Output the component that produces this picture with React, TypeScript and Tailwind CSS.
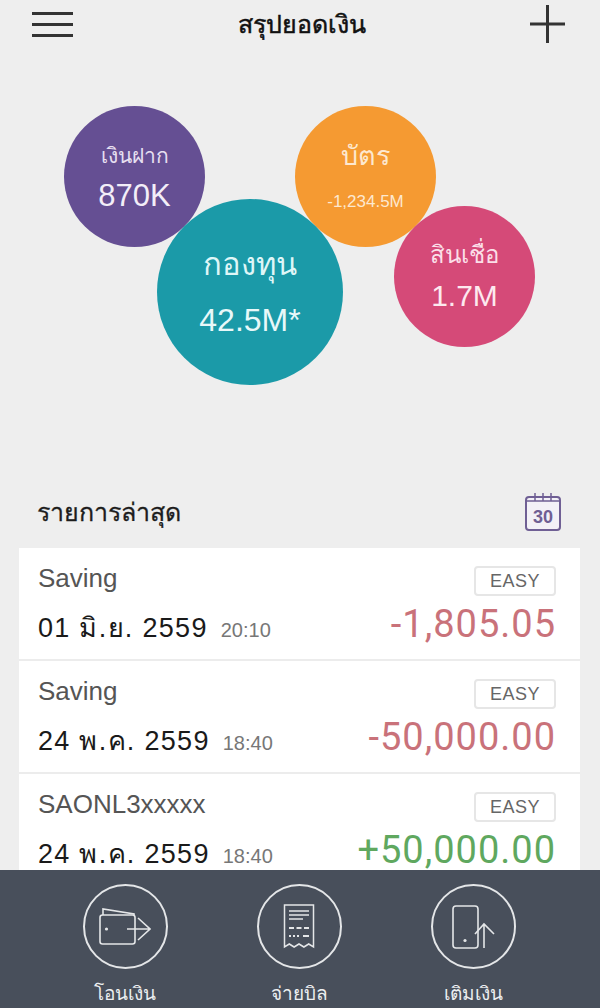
import React from 'react';

const font = { fontFamily: '"Liberation Sans", "Noto Sans", sans-serif' };

const rows = [
  { name: 'Saving', date: '01 มิ.ย. 2559', time: '20:10', amount: '-1,805.05', color: 'text-[#c9727a]' },
  { name: 'Saving', date: '24 พ.ค. 2559', time: '18:40', amount: '-50,000.00', color: 'text-[#c9727a]' },
  { name: 'SAONL3xxxxx', date: '24 พ.ค. 2559', time: '18:40', amount: '+50,000.00', color: 'text-[#5fa85f]' },
];

const Bubble: React.FC<{ className: string; label: string; value: string; labelClass: string; valueClass: string }> = ({ className, label, value, labelClass, valueClass }) => (
  <div className={`absolute rounded-full flex flex-col items-center justify-center text-white ${className}`}>
    <div className={labelClass}>{label}</div>
    <div className={valueClass}>{value}</div>
  </div>
);

const NavButton: React.FC<{ label: string; children: React.ReactNode }> = ({ label, children }) => (
  <div className="w-[120px] flex flex-col items-center">
    <div className="w-[85px] h-[85px] rounded-full border-2 border-[#e4e6e8] flex items-center justify-center">
      {children}
    </div>
    <div className="mt-[11px] text-[19px] leading-[28px] text-[#eceef0]">{label}</div>
  </div>
);

const App: React.FC = () => {
  return (
    <div className="w-[600px] h-[1008px] overflow-hidden flex flex-col bg-[#eeeeee]" style={font}>
      <header className="h-[50px] shrink-0 flex items-center justify-between pl-[32px] pr-[35px]">
        <div className="w-[41px] flex flex-col gap-[8px] -mt-[1px]">
          <div className="h-[3px] bg-[#333333]" />
          <div className="h-[3px] bg-[#333333]" />
          <div className="h-[3px] bg-[#333333]" />
        </div>
        <div className="text-[25px] leading-[34px] -mt-[3px] font-medium [-webkit-text-stroke:0.5px_#111111] text-[#111111]">สรุปยอดเงิน</div>
        <svg width="35" height="38" viewBox="0 0 35 38" className="-mt-[2px]">
          <path d="M17.5 0v38M0 19h35" stroke="#333333" strokeWidth="3" />
        </svg>
      </header>

      <div className="relative h-[420px] shrink-0">
        <Bubble className="left-[64px] top-[56px] w-[141px] h-[141px] bg-[#654f93] pt-[3px]" label="เงินฝาก" value="870K" labelClass="text-[21px] leading-[30px] text-[#e6dff0]" valueClass="text-[31px] leading-[40px] mt-[5px] text-[#f3eef8]" />
        <Bubble className="left-[295px] top-[56px] w-[141px] h-[141px] bg-[#f59a32]" label="บัตร" value="-1,234.5M" labelClass="text-[27px] leading-[34px] -mt-[3px] text-[#fde8cf]" valueClass="text-[17px] leading-[20px] mt-[19px] text-[#fde8cf]" />
        <Bubble className="left-[157px] top-[149px] w-[186px] h-[186px] bg-[#1b9aa8]" label="กองทุน" value="42.5M*" labelClass="text-[31px] leading-[42px] -mt-[1px] text-[#dff6f7]" valueClass="text-[32px] leading-[40px] mt-[14px] text-[#e8f8f9]" />
        <Bubble className="left-[394px] top-[156px] w-[141px] h-[141px] bg-[#d54a78]" label="สินเชื่อ" value="1.7M" labelClass="text-[24px] leading-[34px] text-[#fbdfe8]" valueClass="text-[30px] leading-[40px] mt-[4px] text-[#fde9ef]" />
      </div>

      <div className="h-[78px] shrink-0 flex items-center justify-between pl-[37px] pr-[39px] pt-[5px]">
        <div className="text-[25px] leading-[36px] font-medium [-webkit-text-stroke:0.3px_#1c1c1c] text-[#1c1c1c]">รายการล่าสุด</div>
        <svg width="36" height="38" viewBox="0 0 36 38" fill="none" className="text-[#6f5f94] -mb-[1px]">
          <rect x="1" y="4" width="34" height="33" rx="3" stroke="currentColor" strokeWidth="2" fill="#f3f1f7" />
          <path d="M10 0v8M18 0v8M26 0v8M1 8h34" stroke="currentColor" strokeWidth="1.5" />
          <text x="18" y="30" textAnchor="middle" fontSize="18" fontWeight="700" fill="currentColor" fontFamily="Liberation Sans, sans-serif">30</text>
        </svg>
      </div>

      <div className="flex-1 min-h-0 ml-[19px] mr-[20px] bg-white">
        {rows.map((row, i) => (
          <div key={i} className="h-[113px] last:h-[96px] border-b-2 last:border-b-0 border-[#ececec] pl-[19px] pr-[24px] pt-[13px]">
            <div className="flex items-start justify-between">
              <div className="text-[26px] leading-[34px] text-[#555555]">{row.name}</div>
              <div className="w-[82px] h-[30px] mt-[5px] rounded-[4px] border-2 border-[#e6e6e6] flex items-center justify-center text-[18px] tracking-[0.5px] text-[#666666]">EASY</div>
            </div>
            <div className="flex items-baseline justify-between mt-[8px]">
              <div className="flex items-baseline">
                <span className="text-[27px] leading-[40px] tracking-[1.3px] text-[#1a1a1a]">{row.date}</span>
                <span className="ml-[13px] text-[20px] text-[#777777]">{row.time}</span>
              </div>
              <div className={`text-[38px] leading-[40px] tracking-[1px] ${row.color}`} style={{ fontFamily: 'Roboto, sans-serif' }}>
                {row.amount}
              </div>
            </div>
          </div>
        ))}
      </div>

      <nav className="h-[138px] shrink-0 bg-[#484f5b] flex justify-center gap-[54px] pt-[14px] pr-[2px]">
        <NavButton label="โอนเงิน">
          <svg width="52" height="37" viewBox="0 0 52 37" fill="none" stroke="#e4e6e8" strokeWidth="1.6">
            <path d="M4 7V1l31 5v2" />
            <rect x="1" y="7" width="35" height="29" rx="2.5" />
            <circle cx="7.5" cy="21" r="1.6" fill="#e4e6e8" stroke="none" />
            <path d="M28 21h23M39 10l12 11-12 11" />
          </svg>
        </NavButton>
        <NavButton label="จ่ายบิล">
          <svg width="32" height="45" viewBox="0 0 32 45" fill="none" stroke="#e4e6e8" strokeWidth="1.5">
            <path d="M1.5 43V1h29v42l-4.8-3-4.8 3-4.9-3-4.9 3-4.8-3z" />
            <path d="M6 7h20M6 11h20M6 15h14" />
            <path d="M6 24h5M13.5 24h5M21 24h5" strokeWidth="1.8" />
            <path d="M6 32h2M10 32h2M14 32h2M20 32h6" strokeWidth="1.8" />
          </svg>
        </NavButton>
        <NavButton label="เติมเงิน">
          <svg width="43" height="44" viewBox="0 0 43 44" fill="none" stroke="#e4e6e8" strokeWidth="1.6">
            <rect x="1" y="1" width="25" height="42" rx="3" />
            <circle cx="13" cy="35.5" r="1.6" fill="#e4e6e8" stroke="none" />
            <path d="M32 43V20M23 29l9-10 10 10" />
          </svg>
        </NavButton>
      </nav>
    </div>
  );
};

export default App;
